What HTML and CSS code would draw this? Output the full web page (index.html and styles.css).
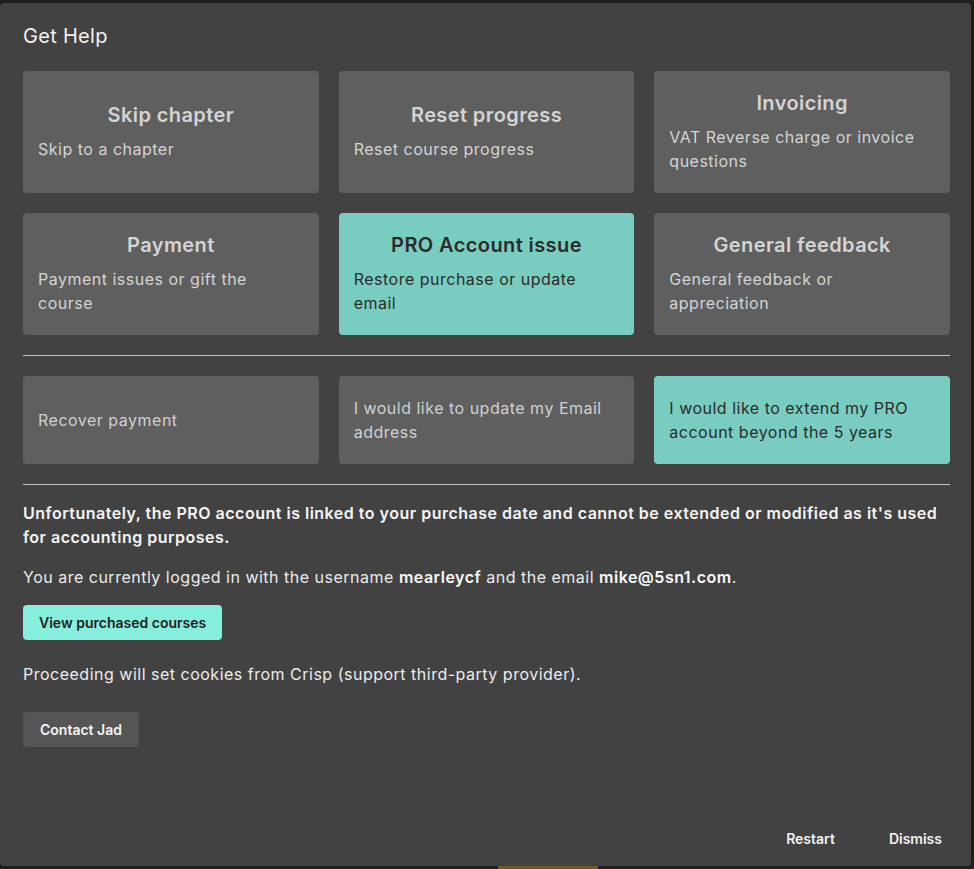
FILE: index.html
```html
<!DOCTYPE html>
<html>
<head>
<meta charset="utf-8">
<link rel="stylesheet" href="styles.css">
</head>
<body>
<div class="modal">
  <h1 class="title">Get Help</h1>
  <div class="grid">
    <div class="card"><div class="card-title">Skip chapter</div><div class="card-desc">Skip to a chapter</div></div>
    <div class="card"><div class="card-title">Reset progress</div><div class="card-desc">Reset course progress</div></div>
    <div class="card"><div class="card-title">Invoicing</div><div class="card-desc">VAT Reverse charge or invoice questions</div></div>
    <div class="card"><div class="card-title">Payment</div><div class="card-desc">Payment issues or gift the course</div></div>
    <div class="card active"><div class="card-title">PRO Account issue</div><div class="card-desc">Restore purchase or update email</div></div>
    <div class="card"><div class="card-title">General feedback</div><div class="card-desc">General feedback or appreciation</div></div>
  </div>
  <hr class="divider">
  <div class="grid">
    <div class="option">Recover payment</div>
    <div class="option">I would like to update my Email address</div>
    <div class="option active">I would like to extend my PRO account beyond the 5 years</div>
  </div>
  <hr class="divider divider-tight">
  <p class="strong-text">Unfortunately, the PRO account is linked to your purchase date and cannot be extended or modified as it's used for accounting purposes.</p>
  <p class="text">You are currently logged in with the username <b>mearleycf</b> and the email <b>mike@5sn1.com</b>.</p>
  <button class="btn btn-primary">View purchased courses</button>
  <p class="text cookies">Proceeding will set cookies from Crisp (support third-party provider).</p>
  <button class="btn btn-dark">Contact Jad</button>
  <div class="footer">
    <button class="link-btn">Restart</button>
    <button class="link-btn">Dismiss</button>
  </div>
</div>
<div class="under-bar"></div>
</body>
</html>
```

FILE: styles.css
```css
* { box-sizing: border-box; }
html, body { margin: 0; padding: 0; }
body {
  background: #1e1e1e;
  font-family: Inter, "Noto Sans", sans-serif;
  padding-top: 3px;
  height: 869px;
  overflow: hidden;
  position: relative;
}
.modal {
  width: 971px;
  height: 863px;
  background: #424242;
  border-radius: 4px;
  padding: 21px 21px 0 23px;
  display: flex;
  flex-direction: column;
  color: #f0f0f0;
}
.title {
  margin: 0 0 23px;
  font-size: 20px;
  font-weight: 400;
  line-height: 24px;
  letter-spacing: 0.3px;
  color: #f2f2f2;
}
.grid {
  display: grid;
  grid-template-columns: repeat(3, 1fr);
  gap: 20px;
}
.card {
  background: #5f5f5f;
  border-radius: 4px;
  padding: 18px 15px 20px;
  display: flex;
  flex-direction: column;
  justify-content: center;
  color: #d4d4d4;
  min-height: 122px;
}
.card-title {
  font-size: 20px;
  font-weight: 600;
  line-height: 28px;
  text-align: center;
  margin-bottom: 8px;
  letter-spacing: 0.4px;
}
.card-desc {
  font-size: 16px;
  line-height: 24px;
  letter-spacing: 0.5px;
}
.card.active, .option.active {
  background: #79cdc0;
  color: #2b2b2b;
}
.option {
  background: #5f5f5f;
  border-radius: 4px;
  padding: 20px 15px;
  min-height: 88px;
  display: flex;
  align-items: center;
  font-size: 16px;
  line-height: 24px;
  letter-spacing: 0.5px;
  color: #d0d0d0;
}
.divider {
  border: none;
  border-top: 1px solid #c8c8c8;
  margin: 20px 0;
}
.divider-tight { margin-bottom: 16px; }
.strong-text {
  margin: 0 0 16px;
  font-size: 16px;
  font-weight: 600;
  line-height: 24px;
  letter-spacing: 0.5px;
  color: #f5f5f5;
}
.text {
  margin: 0 0 16px;
  font-size: 16px;
  line-height: 24px;
  letter-spacing: 0.5px;
  color: #ececec;
}
.text b { font-weight: 600; color: #fafafa; }
.btn {
  align-self: flex-start;
  border: none;
  border-radius: 4px;
  font-family: inherit;
  font-size: 14px;
  font-weight: 600;
  height: 35px;
  padding: 0 17px;
  cursor: pointer;
}
.btn-primary {
  background: #86eedc;
  color: #1f1f1f;
  padding: 0 16px;
}
.cookies { margin-top: 22px; margin-bottom: 26px; }
.btn-dark {
  background: #555555;
  color: #f4f4f4;
}
.footer {
  margin-top: auto;
  display: flex;
  justify-content: flex-end;
  gap: 20px;
  padding-bottom: 9px;
  margin-right: -9px;
}
.link-btn {
  background: none;
  border: none;
  color: #f2f2f2;
  font-family: inherit;
  font-size: 14px;
  font-weight: 600;
  padding: 6px 17px;
  line-height: 24px;
}
.under-bar {
  position: absolute;
  left: 498px;
  top: 866px;
  width: 100px;
  height: 3px;
  background: #6e5a1a;
}
```
